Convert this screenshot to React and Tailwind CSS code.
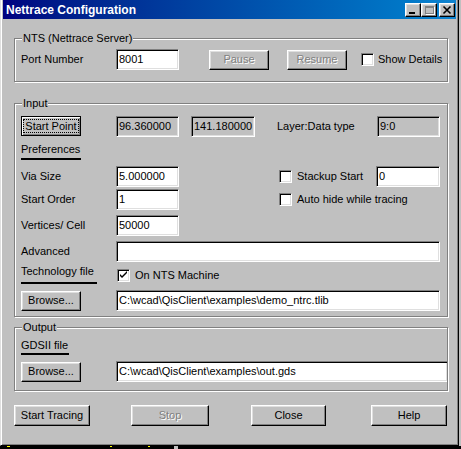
import React from "react";

const raised =
  "border border-t-white border-l-white border-r-black border-b-black shadow-[inset_-1px_-1px_0_#808080,inset_1px_1px_0_#dfdfdf]";
const sunken =
  "border border-t-[#808080] border-l-[#808080] border-r-white border-b-white shadow-[inset_1px_1px_0_#000,inset_-1px_-1px_0_#dfdfdf]";

function Field({ w, grey, children, extra = "" }) {
  return (
    <div
      className={`${sunken} ${w} h-[21px] ${grey ? "bg-[#c0c0c0]" : "bg-white"} flex items-center pl-[2px] overflow-hidden whitespace-nowrap ${extra}`}
    >
      {children}
    </div>
  );
}

function Btn({ w, disabled, children, extra = "" }) {
  return (
    <div
      className={`${raised} ${w} h-[20px] flex items-center justify-center whitespace-nowrap ${disabled ? "text-[#808080] [text-shadow:1px_1px_0_#fff]" : "text-black"} ${extra}`}
    >
      {children}
    </div>
  );
}

function Check({ checked, extra = "" }) {
  return (
    <div className={`${sunken} w-[13px] h-[13px] bg-white shrink-0 relative ${extra}`}>
      {checked && (
        <svg width="11" height="11" viewBox="0 0 11 11" className="absolute left-0 top-0">
          <path d="M2 4 L2 6 L4 8 L9 3 L9 1 L4 6 Z" fill="#000" />
        </svg>
      )}
    </div>
  );
}

function Group({ label, extra = "", children }) {
  return (
    <div
      className={`relative border border-[#808080] shadow-[inset_1px_1px_0_#fff,1px_1px_0_#fff] ml-[11px] w-[434px] pl-[6px] ${extra}`}
    >
      <span className="absolute left-[7px] top-[-7px] bg-[#c0c0c0] px-[1px] leading-[13px]">
        {label}
      </span>
      {children}
    </div>
  );
}

function TitleBtn({ children, extra = "" }) {
  return (
    <div className={`${raised} w-[16px] h-[14px] bg-[#c0c0c0] relative ${extra}`}>{children}</div>
  );
}

export default function App() {
  return (
    <div className="w-[461px] h-[449px] bg-[#c0c0c0] font-['Liberation_Sans',Arial,sans-serif] text-[11px] leading-[13px] text-black overflow-hidden">
      <div className="w-[459px] h-[446px] bg-[#c0c0c0] border-l border-r border-b border-l-[#dfdfdf] border-r-black border-b-black shadow-[inset_1px_0_0_#fff,inset_-1px_-1px_0_#808080] px-[2px] flex flex-col">
        {/* Title bar */}
        <div className="h-[19px] w-full shrink-0 bg-linear-to-r from-[#000080] to-[#1084d0] flex items-start pr-[1px]">
          <span className="text-white font-bold text-[12px] leading-[15px] pl-[3px] mt-[3px]">
            Nettrace Configuration
          </span>
          <div className="ml-auto mt-[3px] flex">
            <TitleBtn>
              <div className="absolute left-[3px] top-[8px] w-[6px] h-[2px] bg-black" />
            </TitleBtn>
            <TitleBtn>
              <div className="absolute left-[3px] top-[2px] w-[9px] h-[8px] border border-t-2 border-[#808080] shadow-[1px_1px_0_#fff]" />
            </TitleBtn>
            <TitleBtn extra="ml-[2px]">
              <svg width="14" height="12" viewBox="0 0 14 12" className="absolute left-0 top-0">
                <path d="M3.5 2.5 L10.5 9.5 M10.5 2.5 L3.5 9.5" stroke="#000" strokeWidth="1.6" />
              </svg>
            </TitleBtn>
          </div>
        </div>

        {/* NTS group */}
        <Group label="NTS (Nettrace Server)" extra="mt-[19px] pt-[10px] pb-[11px]">
          <div className="flex items-center h-[21px]">
            <span className="w-[95px]">Port Number</span>
            <Field w="w-[63px]">8001</Field>
            <Btn w="w-[60px]" disabled extra="ml-[30px]">Pause</Btn>
            <Btn w="w-[60px]" disabled extra="ml-[18px]">Resume</Btn>
            <Check extra="ml-[14px]" />
            <span className="ml-[4px]">Show Details</span>
          </div>
        </Group>

        {/* Input group */}
        <Group label="Input" extra="mt-[21px] pt-[12px] pb-[5px]">
          <div className="flex items-start h-[21px]">
            <div className="w-[60px] h-[20px] border border-black shadow-[inset_1px_1px_0_#fff,inset_-1px_-1px_0_#808080] flex items-center justify-center">
              <span className="outline-1 outline-dotted outline-black px-[1px] leading-[12px]">Start Point</span>
            </div>
            <Field w="w-[63px]" grey extra="ml-[35px]">96.360000</Field>
            <Field w="w-[64px]" grey extra="ml-[12px]">141.180000</Field>
            <span className="ml-[22px] w-[100px] self-center">Layer:Data type</span>
            <Field w="w-[63px]" grey extra="h-[20px]">9:0</Field>
          </div>
          <div className="mt-[6px] w-[60px] h-[17px] border-b-2 border-black">Preferences</div>
          <div className="mt-[6px] flex items-center h-[21px]">
            <span className="w-[95px]">Via Size</span>
            <Field w="w-[63px]">5.000000</Field>
            <Check extra="ml-[100px]" />
            <span className="ml-[5px] w-[79px]">Stackup Start</span>
            <Field w="w-[64px]">0</Field>
          </div>
          <div className="mt-[2px] flex items-center h-[21px]">
            <span className="w-[95px]">Start Order</span>
            <Field w="w-[63px]">1</Field>
            <Check extra="ml-[100px]" />
            <span className="ml-[5px]">Auto hide while tracing</span>
          </div>
          <div className="mt-[5px] flex items-center h-[21px]">
            <span className="w-[95px]">Vertices/ Cell</span>
            <Field w="w-[63px]">50000</Field>
          </div>
          <div className="mt-[5px] flex items-center h-[21px]">
            <span className="w-[95px]">Advanced</span>
            <Field w="w-[324px]"></Field>
          </div>
          <div className="mt-[3px] flex items-start">
            <div className="w-[76px] h-[19px] border-b-2 border-black whitespace-nowrap">Technology file</div>
            <Check checked extra="ml-[20px] mt-[4px]" />
            <span className="ml-[5px] mt-[4px]">On NTS Machine</span>
          </div>
          <div className="mt-[6px] flex items-center h-[21px]">
            <Btn w="w-[60px]">Browse...</Btn>
            <Field w="w-[324px]" extra="ml-[35px]">C:\wcad\QisClient\examples\demo_ntrc.tlib</Field>
          </div>
        </Group>

        {/* Output group */}
        <Group label="Output" extra="mt-[10px] pt-[11px] pb-[8px]">
          <div className="w-[48px] h-[16px] border-b-2 border-black whitespace-nowrap">GDSII file</div>
          <div className="mt-[6px] flex items-center h-[21px]">
            <Btn w="w-[60px]">Browse...</Btn>
            <Field w="w-[331px]" extra="ml-[35px] border-r-0">C:\wcad\QisClient\examples\out.gds</Field>
          </div>
        </Group>

        {/* Bottom buttons */}
        <div className="mt-[14px] ml-[11px] flex">
          <Btn w="w-[76px]" extra="h-[21px]">Start Tracing</Btn>
          <Btn w="w-[78px]" disabled extra="h-[21px] ml-[41px]">Stop</Btn>
          <Btn w="w-[75px]" extra="h-[21px] ml-[42px]">Close</Btn>
          <Btn w="w-[76px]" extra="h-[21px] ml-[45px]">Help</Btn>
        </div>
      </div>
      <div className="h-[3px] w-full bg-black flex">
        <div className="ml-[7px] w-[3px] h-[1px] bg-[#ffff00]" />
        <div className="ml-[100px] w-[2px] h-[1px] bg-[#ffff00]" />
        <div className="ml-[36px] w-[2px] h-[1px] bg-[#ffff00]" />
        <div className="ml-[24px] w-[4px] h-[3px] bg-[#c0c0c0]" />
      </div>
    </div>
  );
}
